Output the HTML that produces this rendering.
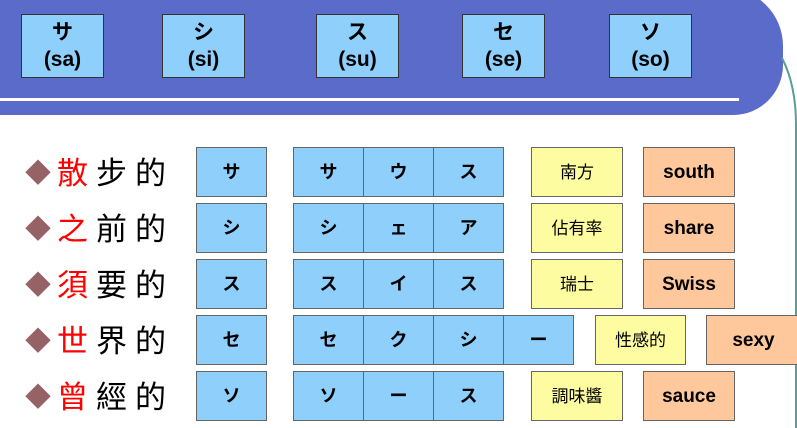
<!DOCTYPE html>
<html><head><meta charset="utf-8"><style>
body{margin:0;width:797px;height:428px;background:#fff;position:relative;overflow:hidden;font-family:"Liberation Sans","Noto Sans CJK JP",sans-serif}
.band{position:absolute;left:-60px;top:-12px;width:843px;height:127px;background:#5b6bc9;border-radius:0 58px 50px 0}
.wl{position:absolute;left:0;top:98px;width:739px;height:3px;background:#fff}
.k{position:absolute;top:14px;width:83px;height:64px;background:#8ecffc;border:1px solid #333;box-sizing:border-box;text-align:center;font-weight:bold;font-size:21px;line-height:27px;padding-top:4px}
.b{position:absolute;height:50px;box-sizing:border-box;border:1.5px solid #666;display:flex;align-items:center;justify-content:center;font-weight:bold;line-height:1}
.bl{background:#8ecffc;font-size:18px}
.ye{background:#fefca0;font-size:17px;font-weight:normal}
.or{background:#fec89c;font-size:19px}
.lab{position:absolute;left:25px;font-size:31px;font-family:"Noto Sans CJK TC",sans-serif;line-height:50px;height:50px;letter-spacing:8px;white-space:nowrap}
.d{color:#956266;font-size:26px;vertical-align:2px;letter-spacing:6px}
.r{color:#f00}
</style></head><body>
<div class="band"></div>
<div class="wl"></div>
<svg style="position:absolute;left:0;top:0" width="797" height="428"><path d="M782 58 Q796 85 796 125 L796 428" stroke="#5a9e96" stroke-width="2" fill="none"/></svg>
<div class="k" style="left:21px">サ<br>(sa)</div>
<div class="k" style="left:162px">シ<br>(si)</div>
<div class="k" style="left:316px">ス<br>(su)</div>
<div class="k" style="left:462px">セ<br>(se)</div>
<div class="k" style="left:609px">ソ<br>(so)</div>

<div class="lab" style="top:146px"><span class="d">◆</span><span class="r">散</span>步的</div>
<div class="lab" style="top:202px"><span class="d">◆</span><span class="r">之</span>前的</div>
<div class="lab" style="top:258px"><span class="d">◆</span><span class="r">須</span>要的</div>
<div class="lab" style="top:314px"><span class="d">◆</span><span class="r">世</span>界的</div>
<div class="lab" style="top:370px"><span class="d">◆</span><span class="r">曾</span>經的</div>

<div class="b bl" style="left:196px;top:147px;width:71px">サ</div>
<div class="b bl" style="left:293px;top:147px;width:71px">サ</div>
<div class="b bl" style="left:363px;top:147px;width:71px">ウ</div>
<div class="b bl" style="left:433px;top:147px;width:71px">ス</div>
<div class="b ye" style="left:531px;top:147px;width:92px">南方</div>
<div class="b or" style="left:643px;top:147px;width:92px">south</div>

<div class="b bl" style="left:196px;top:203px;width:71px">シ</div>
<div class="b bl" style="left:293px;top:203px;width:71px">シ</div>
<div class="b bl" style="left:363px;top:203px;width:71px">ェ</div>
<div class="b bl" style="left:433px;top:203px;width:71px">ア</div>
<div class="b ye" style="left:531px;top:203px;width:92px">佔有率</div>
<div class="b or" style="left:643px;top:203px;width:92px">share</div>

<div class="b bl" style="left:196px;top:259px;width:71px">ス</div>
<div class="b bl" style="left:293px;top:259px;width:71px">ス</div>
<div class="b bl" style="left:363px;top:259px;width:71px">イ</div>
<div class="b bl" style="left:433px;top:259px;width:71px">ス</div>
<div class="b ye" style="left:531px;top:259px;width:92px">瑞士</div>
<div class="b or" style="left:643px;top:259px;width:92px">Swiss</div>

<div class="b bl" style="left:196px;top:315px;width:71px">セ</div>
<div class="b bl" style="left:293px;top:315px;width:71px">セ</div>
<div class="b bl" style="left:363px;top:315px;width:71px">ク</div>
<div class="b bl" style="left:433px;top:315px;width:71px">シ</div>
<div class="b bl" style="left:503px;top:315px;width:71px">ー</div>
<div class="b ye" style="left:595px;top:315px;width:91px">性感的</div>
<div class="b or" style="left:706px;top:315px;width:95px">sexy</div>

<div class="b bl" style="left:196px;top:371px;width:71px">ソ</div>
<div class="b bl" style="left:293px;top:371px;width:71px">ソ</div>
<div class="b bl" style="left:363px;top:371px;width:71px">ー</div>
<div class="b bl" style="left:433px;top:371px;width:71px">ス</div>
<div class="b ye" style="left:531px;top:371px;width:92px">調味醬</div>
<div class="b or" style="left:643px;top:371px;width:92px">sauce</div>
</body></html>
